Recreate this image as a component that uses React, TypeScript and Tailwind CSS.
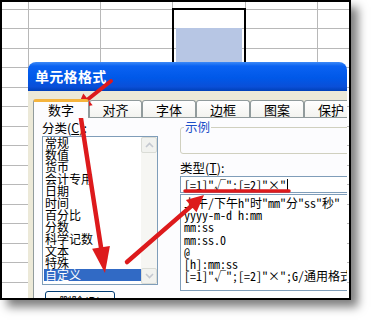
import React from 'react';

const cjk = "font-['Noto_Sans_CJK_SC','Noto_Sans',sans-serif]";
const mono = "font-['Noto_Sans_Mono_CJK_SC','Liberation_Mono','Noto_Sans_CJK_SC',monospace]";

const colWidths = [27, 72, 72, 73, 72, 60];
const rowHeights = [8, 19, 20, 19, 20, 19, 20, 19, 20, 19, 20, 19, 20, 19, 20, 19];

const categories = ['常规', '数值', '货币', '会计专用', '日期', '时间', '百分比', '分数', '科学记数', '文本', '特殊', '自定义'];
const formats = [
  '上午/下午h"时"mm"分"ss"秒"',
  'yyyy-m-d h:mm',
  'mm:ss',
  'mm:ss.0',
  '@',
  '[h]:mm:ss',
  '[=1]"√";[=2]"×";G/通用格式'];

const tabs = [
  { label: '数字', w: 'w-[56px]' },
  { label: '对齐', w: 'w-[53px]' },
  { label: '字体', w: 'w-[54px]' },
  { label: '边框', w: 'w-[54px]' },
  { label: '图案', w: 'w-[54px]' },
  { label: '保护', w: 'w-[54px]' }];


type ArrowProps = { x1: number; y1: number; x2: number; y2: number; w: number; hl: number; hw: number };

function Arrow({ x1, y1, x2, y2, w, hl, hw }: ArrowProps) {
  const len = Math.hypot(x2 - x1, y2 - y1);
  const ux = (x2 - x1) / len;
  const uy = (y2 - y1) / len;
  const bx = x2 - ux * hl;
  const by = y2 - uy * hl;
  const nx = -uy * hw / 2;
  const ny = ux * hw / 2;
  return (
    <g>
      <line x1={x1} y1={y1} x2={bx + ux * 2} y2={by + uy * 2} stroke="#dd1a1c" strokeWidth={w} strokeLinecap="round" />
      <polygon points={`${x2},${y2} ${bx + nx},${by + ny} ${bx - nx},${by - ny}`} fill="#dd1a1c" />
    </g>);

}

function Chevron({ up }: { up?: boolean }) {
  return (
    <svg width="9" height="6" viewBox="0 0 9 6">
      <path d={up ? 'M1 5 L4.5 1.5 L8 5' : 'M1 1 L4.5 4.5 L8 1'} fill="none" stroke="#c4c8d0" strokeWidth="1.6" />
    </svg>);

}

export default function App() {
  return (
    <div className={`relative w-[372px] h-[321px] bg-white overflow-hidden ${cjk}`}>
      <div className="relative w-[351px] h-[300px] border-2 border-black overflow-hidden bg-white shadow-[7px_7px_9px_rgba(0,0,0,0.5)]">
        {/* sheet grid */}
        <div className="flex flex-col">
          {rowHeights.map((h, r) =>
          <div key={r} className="flex shrink-0" style={{ height: h }}>
              {colWidths.map((w, c) =>
            <div key={c} className="shrink-0 border-r border-b border-[#b8b8b8]" style={{ width: w }} />
            )}
            </div>
          )}
        </div>

        {/* selected cell */}
        <div className="absolute left-[170px] top-[6px] w-[74px] h-[60px] border-2 border-black flex flex-col">
          <div className="h-[18px]" />
          <div className="flex-1 mx-[2px] bg-[#b7c6e4]" />
        </div>

        {/* dialog */}
        <div className="absolute left-[26px] top-[60px] w-[319px] h-[240px] overflow-hidden flex flex-col">
          <div className="h-[29px] shrink-0 rounded-tl-[8px] rounded-tr-[8px] bg-[linear-gradient(180deg,#3d8af7_0%,#0a62f2_14%,#0058e8_55%,#0a4fd8_85%,#0040b8_100%)] flex items-center pl-[7px] text-white font-bold text-[14px] tracking-[0.3px]">
            单元格格式
          </div>
          <div className="flex flex-1">
            <div className="w-[3px] bg-[#0a46d6]" />
            <div className="flex-1 bg-[#ece9d8] pt-[7px] pl-[5px]">
              <div className="flex items-end h-[19px] text-[13px] text-black">
                {tabs.map((t, i) =>
                i === 0 ?
                <div key={t.label} className={`${t.w} h-[19px] shrink-0 border-x border-[#919b9c] border-t-[3px] border-t-[#f5b43c] rounded-t-[3px] bg-[#fcfcfe] flex items-center justify-center leading-[14px] relative z-10 -mb-px`}>
                      {t.label}
                    </div> :

                <div key={t.label} className={`${t.w} h-[17px] shrink-0 border border-b-0 border-[#919b9c] rounded-t-[3px] bg-[linear-gradient(180deg,#ffffff,#f3f3ef)] flex items-center justify-center leading-[14px] pt-[1px]`}>
                      {t.label}
                    </div>

                )}
              </div>
              <div className="h-[200px] border border-[#919b9c] bg-[#fcfcfe] flex pl-[8px] gap-[22px] overflow-hidden">
                {/* left column */}
                <div className="w-[116px] shrink-0 flex flex-col">
                  <div className="h-[18px] pt-[2px] leading-[16px] text-[12.5px] text-black">
                    分类(<span className="underline">C</span>):
                  </div>
                  <div className="h-[149px] border border-[#7f9db9] bg-white flex">
                    <div className="flex-1 pl-[1px] text-[12px] leading-[12px] text-black">
                      {categories.map((c, i) =>
                      <div key={c} className={i === categories.length - 1 ? 'h-[12px] bg-[#316ac5] text-white pl-[1px]' : 'h-[12px] pl-[1px]'}>
                          {c}
                        </div>
                      )}
                    </div>
                    <div className="w-[16px] flex flex-col bg-[#f6f6f3]">
                      <div className="h-[16px] border border-[#dadcd6] rounded-[2px] bg-[#f1f2ef] flex items-center justify-center">
                        <Chevron up />
                      </div>
                      <div className="flex-1" />
                      <div className="h-[16px] border border-[#dadcd6] rounded-[2px] bg-[#f1f2ef] flex items-center justify-center">
                        <Chevron />
                      </div>
                    </div>
                  </div>
                  <div className="mt-[6px] ml-[3px] w-[70px] h-[23px] border border-[#003c74] rounded-[3px] bg-[linear-gradient(180deg,#ffffff,#ecebe6)] text-[12.5px] leading-[20px] text-center text-black">
                    删除(<span className="underline">D</span>)
                  </div>
                </div>

                {/* right column */}
                <div className="w-[170px] shrink-0 flex flex-col">
                  <div className="relative mt-[9px] h-[27px] border border-[#d0d0bf] rounded-[3px]">
                    <span className="absolute -top-[8px] left-[3px] px-[1px] bg-[#fcfcfe] text-[12.5px] leading-[14px] text-[#1d4fc8]">
                      示例
                    </span>
                  </div>
                  <div className="mt-[5px] h-[17px] leading-[17px] text-[12.5px] text-black">
                    类型(<span className="underline">T</span>):
                  </div>
                  <div className={`h-[17px] border border-[#7f9db9] bg-white pl-[3px] flex items-center text-[12px] leading-[14px] text-black whitespace-nowrap ${mono}`}>
                    <span>[=1]"√";[=2]"×"</span>
                    <span className="inline-block w-px h-[12px] bg-black ml-[1px]" />
                  </div>
                  <div className={`mt-[1px] h-[97px] border border-[#7f9db9] bg-white pl-[3px] pt-[2px] text-[12px] leading-[12.2px] text-black whitespace-nowrap ${mono}`}>
                    {formats.map((f) =>
                    <div key={f}>{f}</div>
                    )}
                  </div>
                </div>
              </div>
            </div>
          </div>
        </div>
      </div>

      {/* red annotation arrows */}
      <svg className="absolute left-0 top-0 pointer-events-none" width="372" height="321">
        <Arrow x1={111} y1={81} x2={77} y2={108} w={4} hl={14} hw={15} />
        <Arrow x1={80} y1={112} x2={105} y2={273} w={4.5} hl={26} hw={18} />
        <Arrow x1={127} y1={262} x2={204} y2={195} w={4.5} hl={17} hw={16} />
        <line x1={185} y1={191} x2={289} y2={191} stroke="#dd1a1c" strokeWidth={3.5} strokeLinecap="round" />
      </svg>
    </div>);

}
